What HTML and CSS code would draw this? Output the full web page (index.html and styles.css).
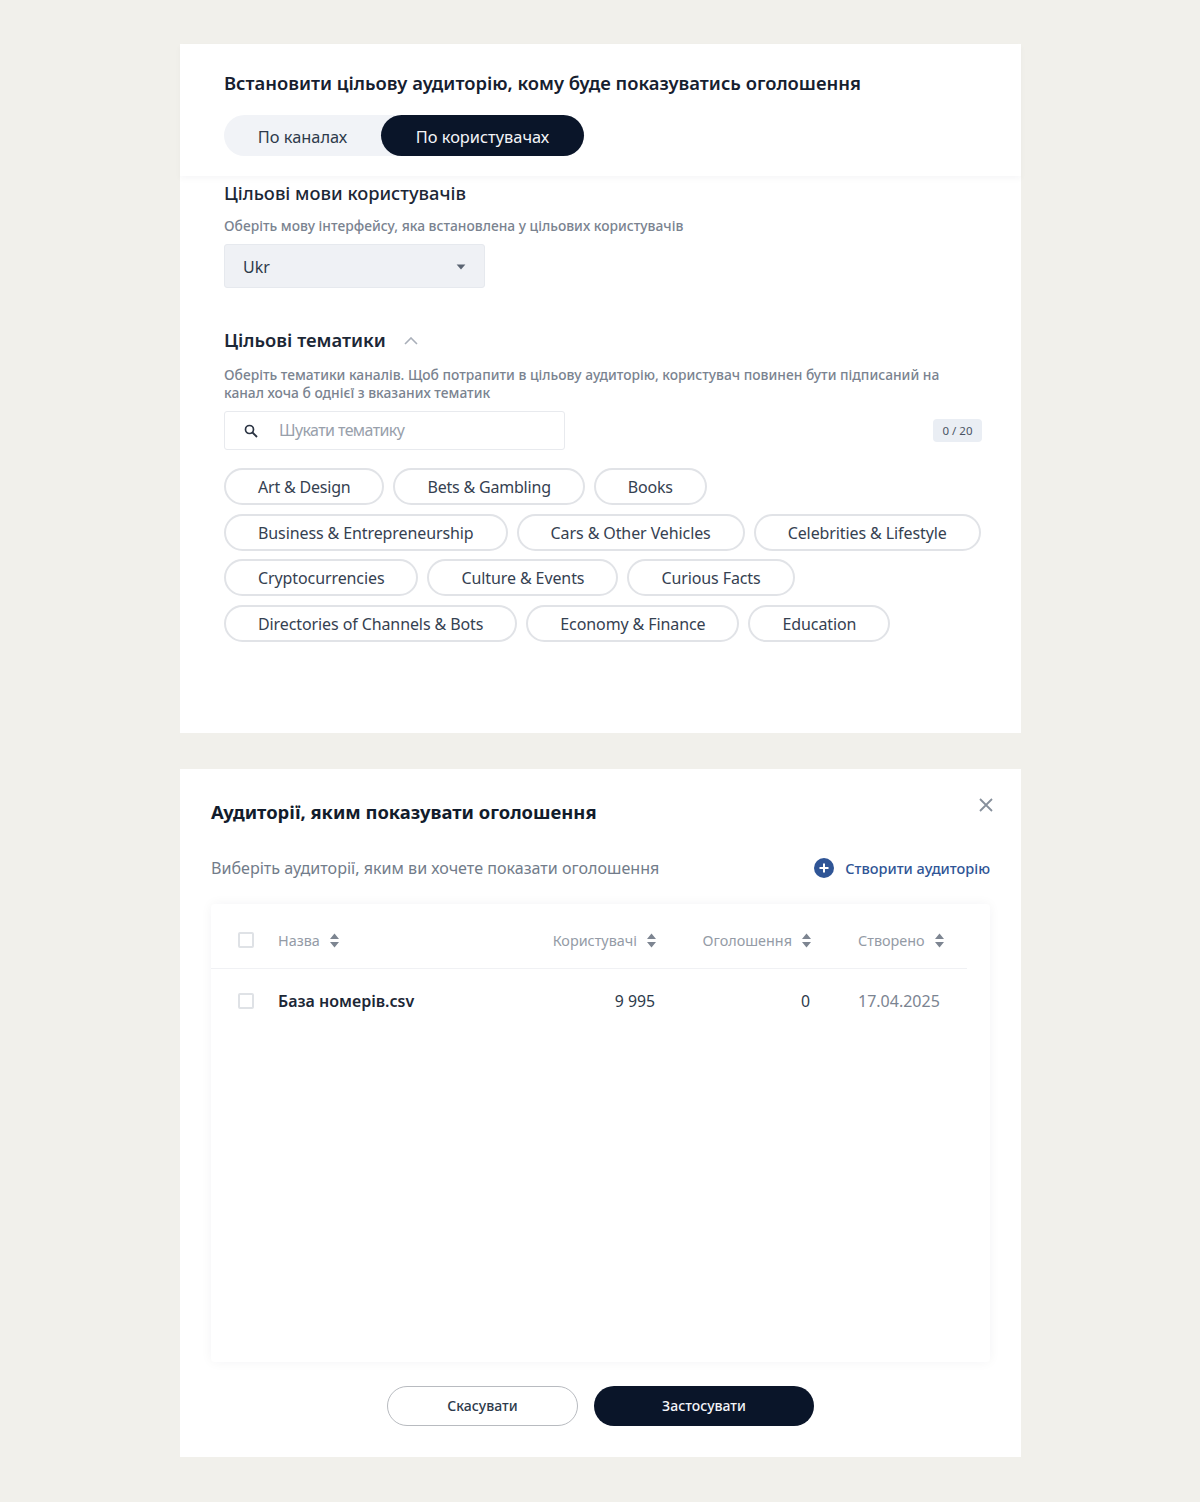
FILE: index.html
```html
<!DOCTYPE html>
<html lang="uk">
<head>
<meta charset="utf-8">
<title>Аудиторії</title>
<link rel="stylesheet" href="styles.css">
</head>
<body>
<main class="page">
  <section class="card card-target">
    <header class="target-head">
      <h1 class="title">Встановити цільову аудиторію, кому буде показуватись оголошення</h1>
      <div class="switch">
        <button class="switch-item">По каналах</button>
        <button class="switch-item switch-active">По користувачах</button>
      </div>
    </header>
    <div class="target-body">
      <h2 class="subtitle subtitle-light">Цільові мови користувачів</h2>
      <p class="hint hint-lang">Оберіть мову інтерфейсу, яка встановлена у цільових користувачів</p>
      <div class="select">
        <span>Ukr</span>
        <svg class="select-caret" width="10" height="6" viewBox="0 0 10 6"><path d="M0.6 0.5h8.8L5 5.5z" fill="#5b6472"/></svg>
      </div>
      <div class="topic-head">
        <h2 class="subtitle">Цільові тематики</h2>
        <svg class="topic-chevron" width="14" height="8" viewBox="0 0 14 8"><path d="M1 7l6-6 6 6" fill="none" stroke="#a9afb9" stroke-width="1.6"/></svg>
      </div>
      <p class="hint hint-topic">Оберіть тематики каналів. Щоб потрапити в цільову аудиторію, користувач повинен бути підписаний на канал хоча б однієї з вказаних тематик</p>
      <div class="search-row">
        <div class="search">
          <svg width="14" height="14" viewBox="0 0 14 14"><circle cx="5.5" cy="5.5" r="4" fill="none" stroke="#2a3342" stroke-width="1.7"/><path d="M8.5 8.5l4.5 4.5" stroke="#2a3342" stroke-width="1.9"/></svg>
          <span class="search-text">Шукати тематику</span>
        </div>
        <span class="counter">0 / 20</span>
      </div>
      <div class="chips">
        <div class="chip-row chip-row-tight">
          <span class="chip">Art &amp; Design</span>
          <span class="chip">Bets &amp; Gambling</span>
          <span class="chip">Books</span>
        </div>
        <div class="chip-row">
          <span class="chip">Business &amp; Entrepreneurship</span>
          <span class="chip">Cars &amp; Other Vehicles</span>
          <span class="chip">Celebrities &amp; Lifestyle</span>
        </div>
        <div class="chip-row">
          <span class="chip">Cryptocurrencies</span>
          <span class="chip">Culture &amp; Events</span>
          <span class="chip">Curious Facts</span>
        </div>
        <div class="chip-row">
          <span class="chip">Directories of Channels &amp; Bots</span>
          <span class="chip">Economy &amp; Finance</span>
          <span class="chip">Education</span>
        </div>
      </div>
    </div>
  </section>

  <section class="card card-aud">
    <svg class="close" width="14" height="14" viewBox="0 0 14 14"><path d="M1 1l12 12M13 1L1 13" stroke="#87909c" stroke-width="1.8"/></svg>
    <h2 class="aud-title">Аудиторії, яким показувати оголошення</h2>
    <div class="aud-sub">
      <span class="aud-hint">Виберіть аудиторії, яким ви хочете показати оголошення</span>
      <a class="create">
        <svg width="20" height="20" viewBox="0 0 20 20"><circle cx="10" cy="10" r="10" fill="#2f5596"/><path d="M10 5.5v9M5.5 10h9" stroke="#fff" stroke-width="2"/></svg>
        <span>Створити аудиторію</span>
      </a>
    </div>
    <div class="panel">
      <div class="row row-head">
        <span class="box"></span>
        <span class="cell cell-name">Назва<svg class="sort" width="9" height="15" viewBox="0 0 9 15"><path d="M4.5 0.5L9 6H0zM4.5 14.5L9 9H0z" fill="#7d8591"/></svg></span>
        <span class="cell cell-users">Користувачі<svg class="sort" width="9" height="15" viewBox="0 0 9 15"><path d="M4.5 0.5L9 6H0zM4.5 14.5L9 9H0z" fill="#7d8591"/></svg></span>
        <span class="cell cell-ads">Оголошення<svg class="sort" width="9" height="15" viewBox="0 0 9 15"><path d="M4.5 0.5L9 6H0zM4.5 14.5L9 9H0z" fill="#7d8591"/></svg></span>
        <span class="cell cell-date">Створено<svg class="sort" width="9" height="15" viewBox="0 0 9 15"><path d="M4.5 0.5L9 6H0zM4.5 14.5L9 9H0z" fill="#7d8591"/></svg></span>
      </div>
      <div class="row row-data">
        <span class="box"></span>
        <span class="cell cell-name cell-strong">База номерів.csv</span>
        <span class="cell cell-users cell-value">9 995</span>
        <span class="cell cell-ads cell-value">0</span>
        <span class="cell cell-date cell-muted">17.04.2025</span>
      </div>
    </div>
    <div class="actions">
      <button class="btn btn-cancel">Скасувати</button>
      <button class="btn btn-apply">Застосувати</button>
    </div>
  </section>
</main>
</body>
</html>
```
FILE: styles.css
```css
* { box-sizing: border-box; }
html, body { margin: 0; padding: 0; }
body {
  background: #f1f0eb;
  font-family: "Noto Sans", "Open Sans", sans-serif;
  color: #0d1b2e;
  height: 1502px;
  overflow: hidden;
}
.page { padding: 44px 0 0 180px; }
.card { width: 841px; background: #fff; }
h1, h2, p { margin: 0; font-weight: 600; }
button { font-family: inherit; border: 0; cursor: pointer; }

.card-target { height: 689px; }
.target-head {
  height: 132px;
  padding: 26px 44px 0;
  box-shadow: 0 3px 6px rgba(20, 30, 50, 0.035);
  position: relative;
}
.title { font-size: 18.4px; line-height: 25px; color: #16202f; }
.switch {
  margin-top: 20px;
  width: 360px;
  height: 41px;
  display: flex;
  background: #f1f3f7;
  border-radius: 21px;
}
.switch-item {
  height: 41px;
  padding: 2px 0 0;
  background: transparent;
  font-size: 16.4px;
  color: #2d3a4b;
  width: 157px;
  text-align: center;
  white-space: nowrap;
}
.switch-active {
  width: 203px;
  background: #0a1529;
  color: #f3f4f8;
  border-radius: 21px;
}
.target-body { padding: 4px 44px 0; }
.subtitle { font-size: 18.4px; line-height: 25px; color: #1c2736; }
.subtitle-light { font-weight: 500; font-size: 18.3px; }
.hint { font-size: 13.8px; font-weight: 500; color: #7a8390; line-height: 18px; }
.hint-lang { margin-top: 12px; }
.select {
  margin-top: 9px;
  width: 261px;
  height: 44px;
  padding: 1px 18px 0;
  background: #eff1f5;
  border: 1px solid #e6e9ee;
  border-radius: 3px;
  display: flex;
  align-items: center;
  justify-content: space-between;
  font-size: 16px;
  color: #2d3a4b;
}
.topic-head { margin-top: 39px; display: flex; align-items: center; gap: 18px; }
.topic-chevron { margin-top: 2px; }
.hint-topic { margin-top: 14px; width: 740px; }
.search-row {
  margin-top: 9px;
  margin-right: -5px;
  display: flex;
  align-items: center;
  justify-content: space-between;
}
.search {
  width: 341px;
  height: 39px;
  border: 1px solid #e8eaee;
  border-radius: 3px;
  display: flex;
  align-items: center;
  padding-left: 19px;
  gap: 21px;
}
.search-text { font-size: 16px; letter-spacing: -0.6px; color: #98a0ab; margin-top: -2px; }
.counter {
  width: 49px;
  height: 23px;
  background: #eaeef4;
  border-radius: 4px;
  font-size: 11.5px;
  color: #4b5564;
  display: flex;
  align-items: center;
  justify-content: center;
}
.chips { margin-top: 18px; display: flex; flex-direction: column; gap: 8.5px; }
.chip-row { display: flex; gap: 9px; white-space: nowrap; letter-spacing: -0.1px; }
.chip-row-tight { letter-spacing: -0.2px; }
.chip {
  height: 37px;
  padding: 1px 32px 0;
  border: 2px solid #e1e3e7;
  border-radius: 19px;
  font-size: 16px;
  color: #354151;
  display: flex;
  align-items: center;
}

.card-aud {
  margin-top: 36px;
  height: 688px;
  padding: 30px 31px 0;
  position: relative;
}
.close { position: absolute; top: 29px; right: 28px; }
.aud-title { font-size: 18.4px; line-height: 25px; font-weight: 700; color: #121c2c; }
.aud-sub {
  margin-top: 30px;
  display: flex;
  align-items: center;
  justify-content: space-between;
  height: 28px;
}
.aud-hint { font-size: 16.1px; color: #727c8a; }
.create {
  display: flex;
  align-items: center;
  gap: 11px;
  font-size: 14.5px;
  font-weight: 500;
  color: #2f5596;
}
.panel {
  margin-top: 22px;
  height: 458px;
  box-shadow: 0 0 12px rgba(20, 30, 50, 0.05);
  border-radius: 4px;
}
.row { display: flex; align-items: center; position: relative; margin-right: 23px; }
.row-head { height: 65px; padding-top: 8px; border-bottom: 1px solid #f0f1f4; }
.row-data { height: 64px; }
.box {
  width: 16px;
  height: 16px;
  margin-left: 27px;
  border: 2px solid #dfe2e6;
  border-radius: 2px;
  flex: none;
}
.cell { display: flex; align-items: center; gap: 10px; font-size: 14.4px; color: #949ba6; white-space: nowrap; }
.sort { margin-right: -1px; }
.cell-name { margin-left: 24px; width: 230px; flex: none; }
.cell-users { width: 147px; flex: none; justify-content: flex-end; }
.cell-ads { width: 155px; flex: none; justify-content: flex-end; }
.cell-date { margin-left: 48px; flex: none; }
.cell-strong { font-size: 16px; font-weight: 600; color: #1c2736; }
.cell-value { font-size: 15.8px; color: #2d3a4b; }
.cell-muted { font-size: 16px; color: #7b8491; }

.actions { margin-top: 24px; display: flex; justify-content: center; gap: 16px; }
.btn { height: 40px; padding: 0 0 2px; border-radius: 20px; font-size: 14px; font-weight: 500; }
.btn-cancel { width: 191px; background: #fff; border: 1.5px solid #b8bbc0; color: #2d3a4b; }
.btn-apply { width: 220px; background: #0a1529; color: #f3f4f8; }
```
